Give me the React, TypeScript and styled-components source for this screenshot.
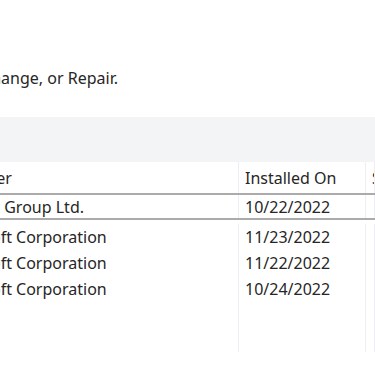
import React from "react";
import styled, { createGlobalStyle } from "styled-components";

const PROGRAMS = [
  { publisher: "Tencent Group Ltd.", installed: "10/22/2022", lined: true },
  { publisher: "Microsoft Corporation", installed: "11/23/2022" },
  { publisher: "Microsoft Corporation", installed: "11/22/2022" },
  { publisher: "Microsoft Corporation", installed: "10/24/2022" },
];

const GlobalStyle = createGlobalStyle`
  html, body {
    margin: 0;
    padding: 0;
    background: #ffffff;
    overflow: hidden;
  }
  body {
    width: 375px;
    height: 366px;
    font-family: "Noto Sans", "Open Sans", sans-serif;
    color: #262626;
  }
`;

const App: React.FC = () => {
  return (
    <StyledView>
      <GlobalStyle />
      <Intro>
        <span>To uninstall a program, select it from the list and then click Uninstall, Change, or Repair.</span>
      </Intro>
      <Toolbar />
      <List>
        <Row $height={31} $lined>
          <Cell>Publisher</Cell>
          <Cell>Installed On</Cell>
          <Cell>Size</Cell>
        </Row>
        {PROGRAMS.map((el, idx) => {
          return (
            <Row key={idx.toString()} $height={el.lined ? 23 : 26} $lined={!!el.lined} $gap={idx === 1 ? 4 : 0}>
              <Cell>{el.publisher}</Cell>
              <Cell>{el.installed}</Cell>
              <Cell></Cell>
            </Row>
          )
        })}
        <Filler>
          <Cell />
          <Cell />
          <Cell />
        </Filler>
      </List>
    </StyledView>
  )
}

const StyledView = styled.main`
  display: flex;
  flex-direction: column;
  width: 375px;
  height: 366px;
`;

const Intro = styled.div`
  margin-top: 68px;
  width: 118px;
  display: flex;
  justify-content: flex-end;
  white-space: nowrap;
  font-size: 16px;
  line-height: 20px;
`;

const Toolbar = styled.div`
  margin-top: 29px;
  height: 45px;
  background: #f3f4f6;
`;

const List = styled.div`
  display: flex;
  flex-direction: column;
  height: 190px;
  margin-left: -65px;
`;

const Row = styled.div<{ $height: number; $lined?: boolean; $gap?: number }>`
  display: grid;
  grid-template-columns: 304px 127px 1fr;
  height: ${(p) => p.$height}px;
  padding-top: ${(p) => p.$gap || 0}px;
  border-bottom: ${(p) => (p.$lined ? "2px solid #ababab" : "none")};
  font-size: 16px;
  box-sizing: content-box;
`;

const Filler = styled(Row).attrs({ $height: 0 })`
  flex: 1;
  height: auto;
`;

const Cell = styled.div`
  display: flex;
  align-items: center;
  padding-left: 6px;
  border-right: 1px solid #eceef4;
  white-space: nowrap;
  overflow: hidden;
`;

export default App;
